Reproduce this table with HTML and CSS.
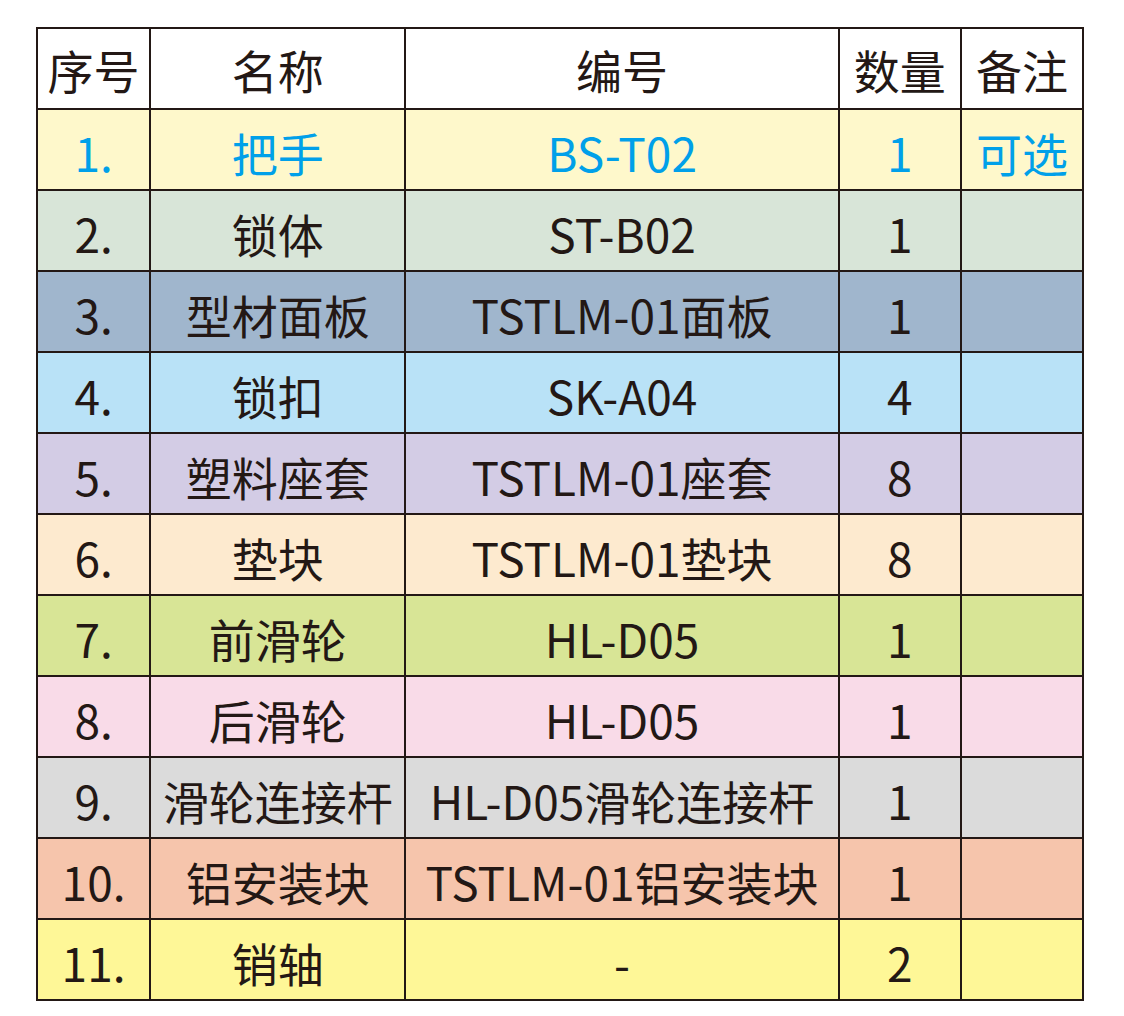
FILE: index.html
```html
<!DOCTYPE html>
<html lang="zh-CN">
<head>
<meta charset="utf-8">
<title>配件清单</title>
<link rel="stylesheet" href="styles.css">
</head>
<body>
<table class="parts">
  <colgroup>
    <col class="c-no"><col class="c-name"><col class="c-code"><col class="c-qty"><col class="c-note">
  </colgroup>
  <thead>
    <tr class="r-head"><th>序号</th><th>名称</th><th>编号</th><th>数量</th><th>备注</th></tr>
  </thead>
  <tbody>
    <tr class="r1 hl"><td>1.</td><td>把手</td><td>BS-T02</td><td>1</td><td>可选</td></tr>
    <tr class="r2"><td>2.</td><td>锁体</td><td>ST-B02</td><td>1</td><td></td></tr>
    <tr class="r3"><td>3.</td><td>型材面板</td><td>TSTLM-01面板</td><td>1</td><td></td></tr>
    <tr class="r4"><td>4.</td><td>锁扣</td><td>SK-A04</td><td>4</td><td></td></tr>
    <tr class="r5"><td>5.</td><td>塑料座套</td><td>TSTLM-01座套</td><td>8</td><td></td></tr>
    <tr class="r6"><td>6.</td><td>垫块</td><td>TSTLM-01垫块</td><td>8</td><td></td></tr>
    <tr class="r7"><td>7.</td><td>前滑轮</td><td>HL-D05</td><td>1</td><td></td></tr>
    <tr class="r8"><td>8.</td><td>后滑轮</td><td>HL-D05</td><td>1</td><td></td></tr>
    <tr class="r9"><td>9.</td><td>滑轮连接杆</td><td>HL-D05滑轮连接杆</td><td>1</td><td></td></tr>
    <tr class="r10"><td>10.</td><td>铝安装块</td><td>TSTLM-01铝安装块</td><td>1</td><td></td></tr>
    <tr class="r11"><td>11.</td><td>销轴</td><td>-</td><td>2</td><td></td></tr>
  </tbody>
</table>
</body>
</html>
```
FILE: styles.css
```css
html, body {
  margin: 0;
  padding: 0;
  background: #ffffff;
}

body {
  padding: 27px 0 0 36px;
  font-family: "Noto Sans CJK SC", "Noto Sans", sans-serif;
  color: #231815;
}

.parts {
  border-collapse: collapse;
  table-layout: fixed;
  width: 1048px;
}

.c-no { width: 113px; }
.c-name { width: 255px; }
.c-code { width: 433px; }
.c-qty { width: 122px; }
.c-note { width: 122px; }

.parts th,
.parts td {
  border: 2px solid #231815;
  height: 75px;
  padding: 4px 0 0 0;
  text-align: center;
  vertical-align: middle;
  font-size: 46px;
  font-weight: 400;
  line-height: 1;
  white-space: nowrap;
  overflow: visible;
  letter-spacing: 0;
}

.parts th {
  height: 79px;
  padding-top: 0;
}

.r-head { background: #ffffff; }
.r1 { background: #fef8cb; }
.r2 { background: #d8e5d8; }
.r3 { background: #a0b6cd; }
.r4 { background: #b9e2f7; }
.r5 { background: #d3cce5; }
.r6 { background: #fdeacf; }
.r7 { background: #d8e596; }
.r8 { background: #f9dbe8; }
.r9 { background: #dbdbdb; }
.r10 { background: #f6c5ac; }
.r11 { background: #fef797; }

.hl td { color: #00a0e9; }
```
